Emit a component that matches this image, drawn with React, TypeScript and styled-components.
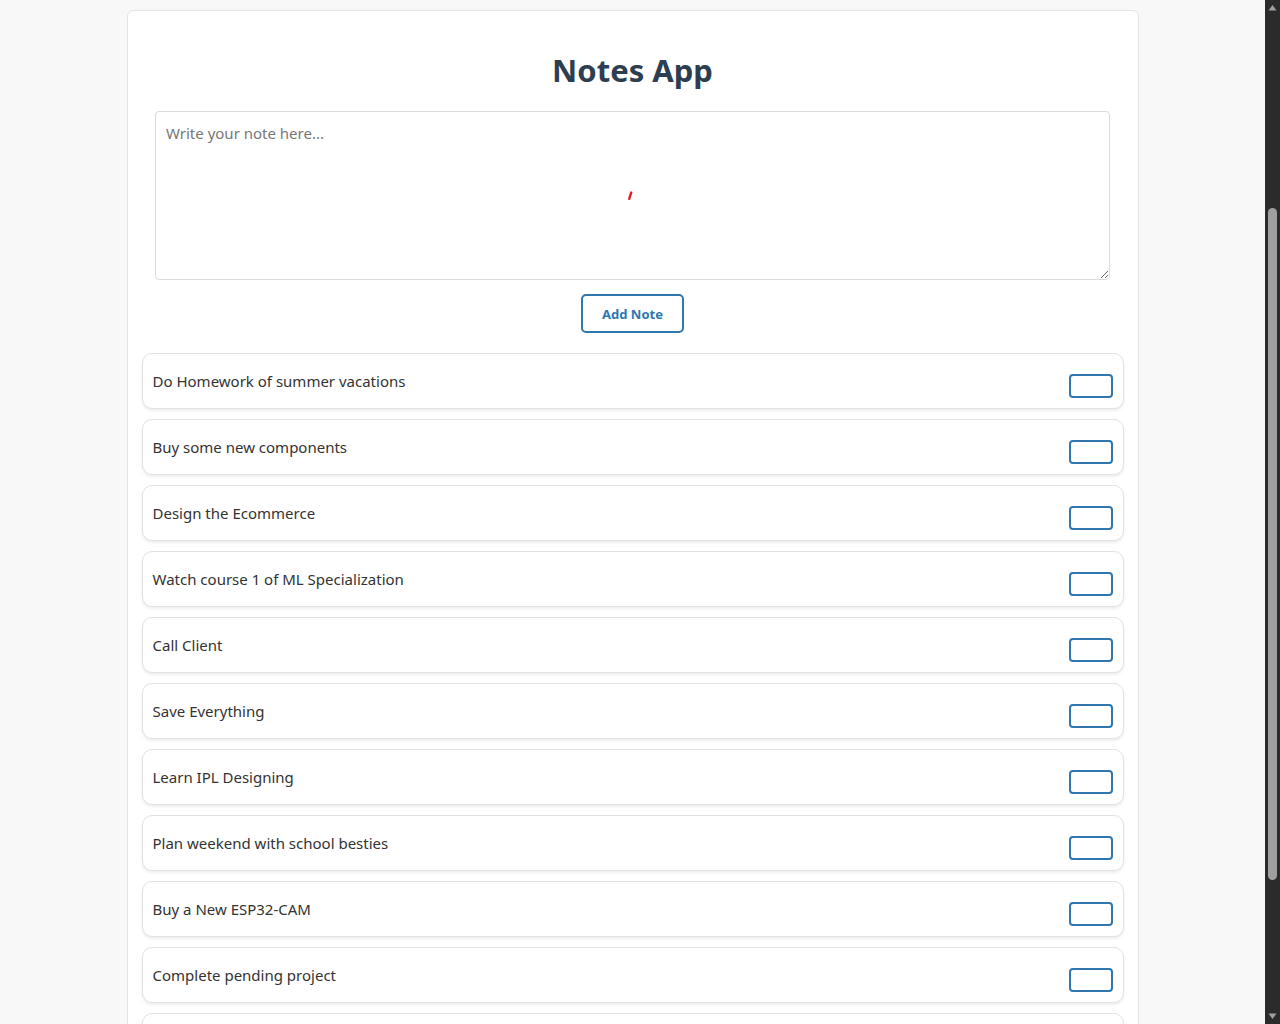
import React, { useState } from "react";
import styled, { createGlobalStyle } from "styled-components";

const GlobalStyle = createGlobalStyle`
  body {
    margin: 0;
    padding: 10px 15px 4px 0;
    background: #f8f8f8;
    font-family: "Noto Sans", "Open Sans", "DejaVu Sans", sans-serif;
    color: #333;
  }
`;

const Card = styled.main`
  width: 80%;
  margin: 0 auto;
  box-sizing: border-box;
  background: #ffffff;
  border: 1px solid #e4e4e4;
  border-radius: 6px;
  padding: 0 14px 14px;
`;

const Title = styled.h1`
  margin: 40px 0 22px;
  text-align: center;
  font-size: 31px;
  line-height: 38px;
  font-weight: 700;
  color: #2c3e50;
`;

const Form = styled.div`
  display: flex;
  flex-direction: column;
  align-items: center;
  gap: 14px;
  margin-bottom: 20px;
`;

const EditorWrap = styled.div`
  position: relative;
  width: calc(100% - 27px);
`;

const NoteInput = styled.textarea`
  display: block;
  width: 100%;
  height: 169px;
  box-sizing: border-box;
  padding: 10px;
  border: 1px solid #dcdcdc;
  border-radius: 4px;
  background: #fff;
  color: #333;
  font-family: "Noto Sans", "Open Sans", sans-serif;
  font-size: 15px;
  line-height: 22px;
  outline: none;
  resize: vertical;
  &::placeholder {
    color: #777;
  }
`;

const RedMark = styled.svg`
  position: absolute;
  left: 471px;
  top: 80px;
  pointer-events: none;
`;

const AddButton = styled.button`
  width: 103px;
  height: 39px;
  box-sizing: border-box;
  border: 2px solid #2f77ae;
  border-radius: 5px;
  background: #fff;
  color: #2f77ae;
  font-family: "Noto Sans", "Open Sans", sans-serif;
  font-size: 13px;
  font-weight: 700;
  cursor: pointer;
`;

const NoteList = styled.ul`
  list-style: none;
  margin: 0;
  padding: 0;
  display: flex;
  flex-direction: column;
  gap: 10px;
`;

const NoteItem = styled.li`
  display: flex;
  align-items: center;
  justify-content: space-between;
  height: 56px;
  box-sizing: border-box;
  padding: 0 10px;
  border: 1px solid #e2e2e2;
  border-radius: 10px;
  background: #fff;
  box-shadow: 0 2px 3px rgba(0, 0, 0, 0.07);
`;

const NoteText = styled.span`
  font-size: 15px;
  color: #333;
`;

const DeleteButton = styled.button`
  width: 44px;
  height: 24px;
  margin-top: 10px;
  box-sizing: border-box;
  border: 2px solid #2f77ae;
  border-radius: 4px;
  background: #fff;
  cursor: pointer;
`;

/* Drawing of the browser's dark scrollbar seen at the right edge of the reference */
const ScrollTrack = styled.div`
  position: fixed;
  top: 0;
  right: 0;
  width: 15px;
  height: 100vh;
  background: #2b2b2b;
  display: flex;
  flex-direction: column;
  align-items: center;
  justify-content: space-between;
  z-index: 10;
`;

const ScrollArrow = styled.svg`
  display: block;
  flex: none;
`;

const ScrollThumb = styled.div`
  position: absolute;
  left: 3px;
  width: 9px;
  top: 208px;
  height: 672px;
  border-radius: 5px;
  background: #9f9f9f;
`;

const initialNotes = [
  "Do Homework of summer vacations",
  "Buy some new components",
  "Design the Ecommerce",
  "Watch course 1 of ML Specialization",
  "Call Client",
  "Save Everything",
  "Learn IPL Designing",
  "Plan weekend with school besties",
  "Buy a New ESP32-CAM",
  "Complete pending project",
  "Read a new book",
  "Clean the workspace",
  "Go for a morning walk",
];

export default function App() {
  const [notes, setNotes] = useState<string[]>(initialNotes);
  const [draft, setDraft] = useState("");

  const addNote = () => {
    const text = draft.trim();
    if (!text) return;
    setNotes([...notes, text]);
    setDraft("");
  };

  const removeNote = (index: number) => {
    setNotes(notes.filter((_, i) => i !== index));
  };

  return (
    <>
      <GlobalStyle />
      <Card>
        <Title>Notes App</Title>
        <Form>
          <EditorWrap>
            <NoteInput
              placeholder="Write your note here..."
              value={draft}
              onChange={(e) => setDraft(e.target.value)}
            />
            <RedMark width="8" height="10" viewBox="0 0 8 10">
              <path d="M5.2 1.6 L3.2 7.8" stroke="#e02020" strokeWidth="2.4" strokeLinecap="round" />
            </RedMark>
          </EditorWrap>
          <AddButton onClick={addNote}>Add Note</AddButton>
        </Form>
        <NoteList>
          {notes.map((note, i) => (
            <NoteItem key={i}>
              <NoteText>{note}</NoteText>
              <DeleteButton aria-label="Delete note" onClick={() => removeNote(i)} />
            </NoteItem>
          ))}
        </NoteList>
      </Card>
      <ScrollTrack aria-hidden="true">
        <ScrollArrow width="15" height="15" viewBox="0 0 15 15">
          <path d="M3.5 10.5 L7.5 5 L11.5 10.5 Z" fill="#9f9f9f" />
        </ScrollArrow>
        <ScrollThumb />
        <ScrollArrow width="15" height="15" viewBox="0 0 15 15">
          <path d="M3.5 4.5 L7.5 10 L11.5 4.5 Z" fill="#9f9f9f" />
        </ScrollArrow>
      </ScrollTrack>
    </>
  );
}
